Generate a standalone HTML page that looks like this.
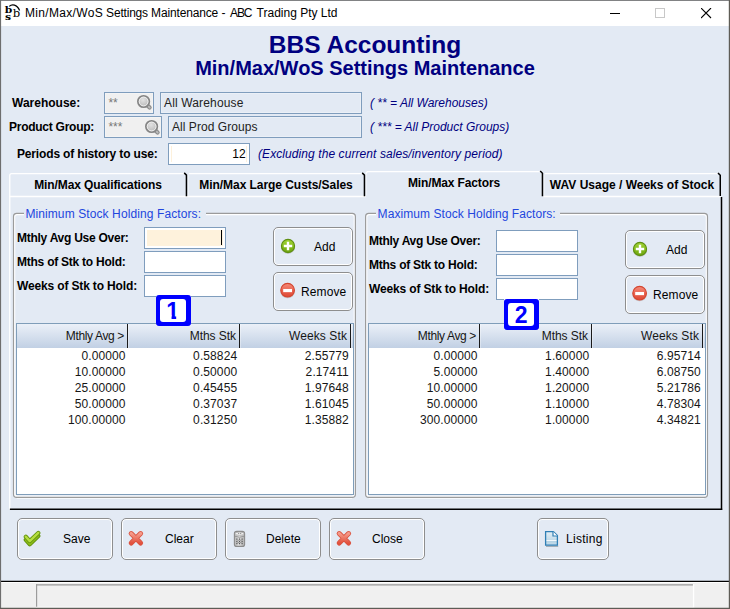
<!DOCTYPE html>
<html><head><meta charset="utf-8"><title>Min/Max/WoS Settings Maintenance</title>
<style>
*{box-sizing:border-box;margin:0;padding:0}
html,body{width:730px;height:609px;overflow:hidden;background:#e3eaf4}
body{position:relative;font-family:"Liberation Sans",Arial,sans-serif;font-size:12px;color:#000}
#root,#root *{position:absolute}
#titlebar{left:1px;top:1px;width:728px;height:25px;background:#fff}
#title{left:24px;top:5px;font-size:12px;white-space:nowrap;color:#000;line-height:14px}
.lbl{font-weight:bold;white-space:nowrap;line-height:14px}
.note{font-style:italic;color:#000080;white-space:nowrap;line-height:14px}
.tf{border:1px solid #7f9dbd;background:#fff;height:22px}
.ro{border:1px solid #7f9dbd;background:#e3eaf4;box-shadow:inset 0 0 0 1px rgba(255,255,255,.3);height:22px;line-height:20px;white-space:nowrap;color:#222}
.btn{border:1px solid #8e8e8e;border-radius:5px;background:#e3eaf4;box-shadow:inset 0 0 0 1px #fff}
.btn span{white-space:nowrap;line-height:14px}
.fs{border:1px solid #9c9c9c;border-radius:4px;box-shadow:1px 1px 0 #fff, inset 1px 1px 0 #fff}
.leg{background:#e3eaf4;color:#2246de;white-space:nowrap;line-height:14px;padding:0 4.5px 0 1.2px}
.tbl{border:1px solid #7f9db9;background:#fff}
.th{top:0;left:0;height:24px;background:linear-gradient(#ebf0f8,#d6e0ee 50%,#c1d0e4)}
.h{top:5px;white-space:nowrap;line-height:14px;color:#161616;text-align:right}
.sep{top:0;width:1px;height:24px;background:#1a1a1a;box-shadow:1px 0 0 rgba(255,255,255,.35)}
.td{white-space:nowrap;line-height:16px;text-align:right;color:#161616;letter-spacing:0.1px}
.tab{font-weight:bold;text-align:center;white-space:nowrap}
.badgebg{background:#fff;width:34.6px;height:31.4px}
.badge{border-radius:3px;background:#0000ff;color:#0000ff;font-weight:bold;font-size:23px;width:34.6px;height:31.4px}
.badge i{left:4.3px;top:3.9px;width:25.7px;height:23.1px;background:#fff;border-radius:3px}
.badge span{left:4px;top:3.5px;width:26.5px;text-align:center;line-height:24px}
</style></head><body>
<div id="root" style="position:absolute;left:0;top:0;width:730px;height:609px">
<div id="titlebar">
 <svg style="left:0px;top:0px" width="24" height="24" viewBox="1 1 24 24"><text x="4.3" y="13" transform="scale(1.1,1)" font-family="DejaVu Serif,serif" font-size="9.8" font-weight="bold">b</text><text x="4.6" y="19.8" transform="scale(1.1,1)" font-family="DejaVu Serif,serif" font-size="9.8" font-weight="bold">s</text><text x="12.7" y="16.9" font-family="DejaVu Serif,serif" font-size="11.6">b</text><path d="M9.2 6.4C12 4 17 4.2 19.6 10.6" fill="none" stroke="#000" stroke-width="1.2"/></svg>
 <div id="title"><span style="position:static;letter-spacing:0.32px">Min/Max/WoS</span><span style="position:static;letter-spacing:-0.2px"> Settings</span><span style="position:static;letter-spacing:-0.15px"> Maintenance</span> - <span style="position:static;letter-spacing:-1.2px;margin-left:1.3px;margin-right:2.3px">ABC</span> Trading Pty Ltd</div>
 <svg style="left:609px;top:7px" width="11" height="11"><path d="M0 5.5H10" stroke="#000" stroke-width="1"/></svg>
 <svg style="left:654px;top:7px" width="11" height="11"><rect x=".5" y=".5" width="9" height="9" fill="none" stroke="#c8c8c8"/></svg>
 <svg style="left:700px;top:7px" width="11" height="11"><path d="M0 0L10 10M10 0L0 10" stroke="#000" stroke-width="1.1"/></svg>
</div>

 <div style="left:0;top:30px;width:730px;text-align:center;font-weight:bold;font-size:24.5px;line-height:30px;color:#000080;transform:translateY(-0.5px)">BBS Accounting</div>
 <div style="left:0;top:56px;width:730px;text-align:center;font-weight:bold;font-size:20px;line-height:24px;color:#000080">Min/Max/WoS Settings Maintenance</div>

 <div class="lbl" style="left:12px;top:96px">Warehouse:</div>
 <div class="ro" style="left:104px;top:92px;width:50px;color:#787878;padding-left:3.4px;background:#f0f0f0">**<svg style="left:31px;top:1px" width="18" height="18" viewBox="0 0 18 18"><defs><radialGradient id="gm1" cx="0.45" cy="0.35" r="0.7"><stop offset="0" stop-color="#e2e2e2"/><stop offset="1" stop-color="#b4b4b4"/></radialGradient></defs><path d="M12 11.9L13.6 13.5" stroke="#8d8d8d" stroke-width="4.2" stroke-linecap="round"/><path d="M12.4 12.3L13.7 13.6" stroke="#bdbdbd" stroke-width="1.8" stroke-linecap="round"/><circle cx="7.6" cy="7.5" r="5.7" fill="url(#gm1)" stroke="#858585" stroke-width="1.8"/><circle cx="7.6" cy="7.5" r="4.4" fill="none" stroke="#efefef" stroke-width="1"/></svg></div>
 <div class="ro" style="left:160px;top:92px;width:202px;padding-left:3px;letter-spacing:0.15px">All Warehouse</div>
 <div class="note" style="left:370px;top:96px">( ** = All Warehouses)</div>

 <div class="lbl" style="left:9px;top:120px;letter-spacing:-0.26px">Product Group:</div>
 <div class="ro" style="left:104px;top:116px;width:58px;color:#787878;padding-left:3.4px;background:#f0f0f0">***<svg style="left:39px;top:2px" width="18" height="18" viewBox="0 0 18 18"><defs><radialGradient id="gm2" cx="0.45" cy="0.35" r="0.7"><stop offset="0" stop-color="#e2e2e2"/><stop offset="1" stop-color="#b4b4b4"/></radialGradient></defs><path d="M12 11.9L13.6 13.5" stroke="#8d8d8d" stroke-width="4.2" stroke-linecap="round"/><path d="M12.4 12.3L13.7 13.6" stroke="#bdbdbd" stroke-width="1.8" stroke-linecap="round"/><circle cx="7.6" cy="7.5" r="5.7" fill="url(#gm2)" stroke="#858585" stroke-width="1.8"/><circle cx="7.6" cy="7.5" r="4.4" fill="none" stroke="#efefef" stroke-width="1"/></svg></div>
 <div class="ro" style="left:168px;top:116px;width:194px;padding-left:3px;letter-spacing:0.05px">All Prod Groups</div>
 <div class="note" style="left:370px;top:120px">( *** = All Product Groups)</div>

 <div class="lbl" style="left:17px;top:147px;letter-spacing:-0.16px">Periods of history to use:</div>
 <div class="tf" style="left:168px;top:143px;width:82px;text-align:right;padding-right:3.4px;line-height:20px"><div style="left:2px;top:2px;width:76px;height:16px;border-left:1px solid #fdf1dc;border-right:1px solid #fdf1dc"></div>12</div>
 <div class="note" style="left:258px;top:147px;letter-spacing:0.08px">(Excluding the current sales/inventory period)</div>

 <div class="tab" style="left:9px;top:175px;width:178px;height:20px;line-height:20px;letter-spacing:-0.11px">Min/Max Qualifications</div>
 <div class="tab" style="left:187px;top:175px;width:178px;height:20px;line-height:20px;letter-spacing:-0.05px">Min/Max Large Custs/Sales</div>
 <div class="tab" style="left:543px;top:175px;width:178px;height:20px;line-height:20px">WAV Usage / Weeks of Stock</div>
 <div class="tab" style="left:365px;top:173px;width:178px;height:20px;line-height:20px;letter-spacing:-0.13px">Min/Max Factors</div>
 <svg style="left:0;top:0" width="730" height="609" viewBox="0 0 730 609"><g fill="none" stroke="#fff" stroke-width="1.35"><path d="M9.75 509.4V175.4Q9.75 173.55 11.6 173.55H184.4"/><path d="M188.9 173.55H362.4"/><path d="M365.9 173.6L367.3 171.6H540.4"/><path d="M544.6 173.55H718.2"/><path d="M9.1 196.4H365.8M543.3 196.4H721" stroke-width="1.55"/><path d="M188.2 174.4V195.6M366.1 173.8V195.6M544 174.4V195.6" stroke-opacity=".55" stroke-width="1.1"/></g><g fill="none" stroke="#000" stroke-width="1.5"><path d="M184.2 172.9L186.45 175.1V196.2"/><path d="M362.2 172.9L364.45 175.1V196.2"/><path d="M540.2 170.9L542.45 173.2V196.2"/><path d="M718 172.9L720.25 175.2V196"/><path d="M721.5 196.9V510"/><path d="M9.9 509.25H722.2" stroke-width="1.7"/></g><path d="M16.7 498.5H352.2" stroke="#f6f9fd" stroke-width="1.1" fill="none"/><path d="M17.05 214.55H351.85Q354.25 214.55 354.25 216.95000000000002V493.85Q354.25 496.25 351.85 496.25H17.05Q14.65 496.25 14.65 493.85V216.95000000000002Q14.65 214.55 17.05 214.55Z" stroke="#fff" stroke-width="1.2" fill="none"/><path d="M16.7 213.4H352.2Q355.4 213.4 355.4 216.6V494.2Q355.4 497.4 352.2 497.4H16.7Q13.5 497.4 13.5 494.2V216.6Q13.5 213.4 16.7 213.4Z" stroke="#9b9b9b" stroke-width="1.15" fill="none"/><path d="M368.8 498.5H704.3" stroke="#f6f9fd" stroke-width="1.1" fill="none"/><path d="M369.15 214.55H703.95Q706.35 214.55 706.35 216.95000000000002V493.85Q706.35 496.25 703.95 496.25H369.15Q366.75 496.25 366.75 493.85V216.95000000000002Q366.75 214.55 369.15 214.55Z" stroke="#fff" stroke-width="1.2" fill="none"/><path d="M368.8 213.4H704.3Q707.5 213.4 707.5 216.6V494.2Q707.5 497.4 704.3 497.4H368.8Q365.6 497.4 365.6 494.2V216.6Q365.6 213.4 368.8 213.4Z" stroke="#9b9b9b" stroke-width="1.15" fill="none"/></svg>

 <div class="leg" style="left:24.2px;top:207px;letter-spacing:0.1px">Minimum Stock Holding Factors:</div>
 <div class="lbl" style="left:17px;top:231px;letter-spacing:-0.26px">Mthly Avg Use Over:</div>
 <div class="lbl" style="left:17px;top:255px;letter-spacing:-0.24px">Mths of Stk to Hold:</div>
 <div class="lbl" style="left:17px;top:279px;letter-spacing:-0.15px">Weeks of Stk to Hold:</div>
 <div class="tf" style="left:144px;top:227px;width:82px;background:#fef2dc;box-shadow:inset 0 0 0 2px #fff"><div style="left:76px;top:2px;width:1px;height:15px;background:#000"></div></div>
 <div class="tf" style="left:144px;top:251px;width:82px"></div>
 <div class="tf" style="left:144px;top:275px;width:82px"></div>
 <div class="btn" style="left:273px;top:227px;width:80px;height:39px"><svg style="left:5px;top:9px" width="18" height="18" viewBox="0 0 18 18"><defs><linearGradient id="ga" x1="0" y1="0" x2="0" y2="1"><stop offset="0" stop-color="#a5d63a"/><stop offset="0.5" stop-color="#86bd1c"/><stop offset="1" stop-color="#6ea510"/></linearGradient></defs><ellipse cx="9" cy="10" rx="7" ry="6.8" fill="#9aa39a" opacity=".55"/><circle cx="9" cy="9" r="6.6" fill="url(#ga)" stroke="#5f8f12" stroke-width="1.1"/><path d="M9 4.8V13.2M4.8 9H13.2" stroke="#fff" stroke-width="2.4"/></svg><span style="left:40px;top:12px">Add</span></div>
 <div class="btn" style="left:273px;top:272px;width:80px;height:39px"><svg style="left:5px;top:8px" width="18" height="18" viewBox="0 0 18 18"><defs><linearGradient id="gr" x1="0" y1="0" x2="0" y2="1"><stop offset="0" stop-color="#f48d7c"/><stop offset="0.5" stop-color="#ea6350"/><stop offset="1" stop-color="#de4a36"/></linearGradient></defs><ellipse cx="8.6" cy="10.2" rx="7.2" ry="7" fill="#a79a9a" opacity=".5"/><circle cx="8.6" cy="9.2" r="6.8" fill="url(#gr)" stroke="#d4452f" stroke-width="1.1"/><path d="M4.2 9.55H13" stroke="#fff" stroke-width="3.2"/></svg><span style="left:27px;top:12px;letter-spacing:0.1px">Remove</span></div>
 <div class="tbl" style="left:16px;top:323px;width:338px;height:172px">
<div class="th" style="width:336px"></div>
<div class="sep" style="left:110px"></div><div class="sep" style="left:222px"></div><div class="sep" style="left:333px"></div>
<div class="h" style="left:1px;width:106px;letter-spacing:-0.36px">Mthly Avg &gt;</div><div class="h" style="left:113px;width:106px;letter-spacing:-0.05px">Mths Stk</div><div class="h" style="left:224px;width:106px;letter-spacing:0.1px">Weeks Stk</div>
<div class="td" style="left:2.5999999999999943px;top:24px;width:106px">0.00000</div><div class="td" style="left:114.19999999999999px;top:24px;width:106px">0.58824</div><div class="td" style="left:225.8px;top:24px;width:106px">2.55779</div>
<div class="td" style="left:2.5999999999999943px;top:40px;width:106px">10.00000</div><div class="td" style="left:114.19999999999999px;top:40px;width:106px">0.50000</div><div class="td" style="left:225.8px;top:40px;width:106px">2.17411</div>
<div class="td" style="left:2.5999999999999943px;top:56px;width:106px">25.00000</div><div class="td" style="left:114.19999999999999px;top:56px;width:106px">0.45455</div><div class="td" style="left:225.8px;top:56px;width:106px">1.97648</div>
<div class="td" style="left:2.5999999999999943px;top:72px;width:106px">50.00000</div><div class="td" style="left:114.19999999999999px;top:72px;width:106px">0.37037</div><div class="td" style="left:225.8px;top:72px;width:106px">1.61045</div>
<div class="td" style="left:2.5999999999999943px;top:88px;width:106px">100.00000</div><div class="td" style="left:114.19999999999999px;top:88px;width:106px">0.31250</div><div class="td" style="left:225.8px;top:88px;width:106px">1.35882</div>
</div>

 <div class="badgebg" style="left:156px;top:295px"></div><div class="badge" style="left:156px;top:295px"><i></i><span style="left:3.5px;clip-path:polygon(0 0,100% 0,100% 70%,63% 70%,63% 100%,45.5% 100%,45.5% 70%,0 70%)">1</span></div>

 <div class="leg" style="left:376.4px;top:207px;letter-spacing:0.07px">Maximum Stock Holding Factors:</div>
 <div class="lbl" style="left:369px;top:234px;letter-spacing:-0.26px">Mthly Avg Use Over:</div>
 <div class="lbl" style="left:369px;top:258px;letter-spacing:-0.24px">Mths of Stk to Hold:</div>
 <div class="lbl" style="left:369px;top:282px;letter-spacing:-0.15px">Weeks of Stk to Hold:</div>
 <div class="tf" style="left:496px;top:230px;width:82px"></div>
 <div class="tf" style="left:496px;top:254px;width:82px"></div>
 <div class="tf" style="left:496px;top:278px;width:82px"></div>
 <div class="btn" style="left:625px;top:230px;width:80px;height:39px"><svg style="left:5px;top:9px" width="18" height="18" viewBox="0 0 18 18"><defs><linearGradient id="ga2" x1="0" y1="0" x2="0" y2="1"><stop offset="0" stop-color="#a5d63a"/><stop offset="0.5" stop-color="#86bd1c"/><stop offset="1" stop-color="#6ea510"/></linearGradient></defs><ellipse cx="9" cy="10" rx="7" ry="6.8" fill="#9aa39a" opacity=".55"/><circle cx="9" cy="9" r="6.6" fill="url(#ga2)" stroke="#5f8f12" stroke-width="1.1"/><path d="M9 4.8V13.2M4.8 9H13.2" stroke="#fff" stroke-width="2.4"/></svg><span style="left:40px;top:12px">Add</span></div>
 <div class="btn" style="left:625px;top:275px;width:80px;height:39px"><svg style="left:5px;top:8px" width="18" height="18" viewBox="0 0 18 18"><defs><linearGradient id="gr2" x1="0" y1="0" x2="0" y2="1"><stop offset="0" stop-color="#f48d7c"/><stop offset="0.5" stop-color="#ea6350"/><stop offset="1" stop-color="#de4a36"/></linearGradient></defs><ellipse cx="8.6" cy="10.2" rx="7.2" ry="7" fill="#a79a9a" opacity=".5"/><circle cx="8.6" cy="9.2" r="6.8" fill="url(#gr2)" stroke="#d4452f" stroke-width="1.1"/><path d="M4.2 9.55H13" stroke="#fff" stroke-width="3.2"/></svg><span style="left:27px;top:12px;letter-spacing:0.1px">Remove</span></div>
 <div class="tbl" style="left:368px;top:323px;width:338px;height:172px">
<div class="th" style="width:336px"></div>
<div class="sep" style="left:110px"></div><div class="sep" style="left:222px"></div><div class="sep" style="left:333px"></div>
<div class="h" style="left:1px;width:106px;letter-spacing:-0.36px">Mthly Avg &gt;</div><div class="h" style="left:113px;width:106px;letter-spacing:-0.05px">Mths Stk</div><div class="h" style="left:224px;width:106px;letter-spacing:0.1px">Weeks Stk</div>
<div class="td" style="left:2.5999999999999943px;top:24px;width:106px">0.00000</div><div class="td" style="left:114.19999999999999px;top:24px;width:106px">1.60000</div><div class="td" style="left:225.8px;top:24px;width:106px">6.95714</div>
<div class="td" style="left:2.5999999999999943px;top:40px;width:106px">5.00000</div><div class="td" style="left:114.19999999999999px;top:40px;width:106px">1.40000</div><div class="td" style="left:225.8px;top:40px;width:106px">6.08750</div>
<div class="td" style="left:2.5999999999999943px;top:56px;width:106px">10.00000</div><div class="td" style="left:114.19999999999999px;top:56px;width:106px">1.20000</div><div class="td" style="left:225.8px;top:56px;width:106px">5.21786</div>
<div class="td" style="left:2.5999999999999943px;top:72px;width:106px">50.00000</div><div class="td" style="left:114.19999999999999px;top:72px;width:106px">1.10000</div><div class="td" style="left:225.8px;top:72px;width:106px">4.78304</div>
<div class="td" style="left:2.5999999999999943px;top:88px;width:106px">300.00000</div><div class="td" style="left:114.19999999999999px;top:88px;width:106px">1.00000</div><div class="td" style="left:225.8px;top:88px;width:106px">4.34821</div>
</div>

 <div class="badgebg" style="left:504px;top:299px"></div><div class="badge" style="left:504px;top:299px"><i></i><span>2</span></div>

 <div class="btn" style="left:17px;top:518px;width:96px;height:42px"><svg style="left:5px;top:11px" width="20" height="19" viewBox="0 0 20 19"><g fill="none" stroke-linecap="round" stroke-linejoin="round"><path d="M2.8 9.9L6.8 14.3L15.3 6" stroke="#5f8f0c" stroke-width="4.2"/><path d="M2.8 9.9L6.8 14.3L15.3 6" stroke="#8cbc18" stroke-width="2.4"/><path d="M2.8 6.7L6.8 11.1L15.3 2.9" stroke="#64940e" stroke-width="4.2"/><path d="M2.8 6.7L6.8 11.1L15.3 2.9" stroke="#b6de40" stroke-width="2.4"/></g></svg><span style="left:45px;top:13px">Save</span></div>
 <div class="btn" style="left:121px;top:518px;width:96px;height:42px"><svg style="left:4px;top:9px" width="20" height="20" viewBox="0 0 20 20"><defs><linearGradient id="gx1" x1="0" y1="0" x2="0" y2="1"><stop offset="0" stop-color="#f59a8a"/><stop offset="1" stop-color="#e2513d"/></linearGradient></defs><path d="M5.2 5.6L14.6 15M14.6 5.6L5.2 15" stroke="#d9503c" stroke-width="5" stroke-linecap="round"/><path d="M5.2 5.6L14.6 15M14.6 5.6L5.2 15" stroke="url(#gx1)" stroke-width="3.4" stroke-linecap="round"/></svg><span style="left:43px;top:13px">Clear</span></div>
 <div class="btn" style="left:225px;top:518px;width:96px;height:42px"><svg style="left:6px;top:11px" width="16" height="19" viewBox="0 0 16 19"><defs><linearGradient id="gd" x1="0" y1="0" x2="1" y2="0"><stop offset="0" stop-color="#b4b4b4"/><stop offset="0.45" stop-color="#e4e4e4"/><stop offset="1" stop-color="#adadad"/></linearGradient></defs><path d="M2.4 3.6Q2.4 1.4 4.8 1.4H10.2Q12.6 1.4 12.6 3.6V14.4Q12.6 16.4 10.2 16.4H4.8Q2.4 16.4 2.4 14.4Z" fill="url(#gd)" stroke="#8b8b8b" stroke-width="1.1"/><ellipse cx="7.5" cy="3.7" rx="4.4" ry="1.6" fill="#efefef" stroke="#a2a2a2" stroke-width=".7"/><path d="M2.6 6.2Q7.5 8.3 12.4 6.2" fill="none" stroke="#909090" stroke-width=".9"/><path d="M6.2 3.5h1M8.2 3.5h1" stroke="#777" stroke-width=".9"/><path d="M4.3 9.2h1.2M6.9 9.2h1.2M9.5 9.2h1.2M4.3 11.4h1.2M6.9 11.4h1.2M9.5 11.4h1.2M4.3 13.5h1.2M6.9 13.5h1.2M9.5 13.5h1.2" stroke="#555" stroke-width="1.3"/><path d="M5.6 10.3h1.2M8.2 10.3h1.2M5.6 12.5h1.2M8.2 12.5h1.2" stroke="#8a8a8a" stroke-width="1"/></svg><span style="left:40px;top:13px">Delete</span></div>
 <div class="btn" style="left:329px;top:518px;width:96px;height:42px"><svg style="left:4px;top:9px" width="20" height="20" viewBox="0 0 20 20"><defs><linearGradient id="gx2" x1="0" y1="0" x2="0" y2="1"><stop offset="0" stop-color="#f59a8a"/><stop offset="1" stop-color="#e2513d"/></linearGradient></defs><path d="M5.2 5.6L14.6 15M14.6 5.6L5.2 15" stroke="#d9503c" stroke-width="5" stroke-linecap="round"/><path d="M5.2 5.6L14.6 15M14.6 5.6L5.2 15" stroke="url(#gx2)" stroke-width="3.4" stroke-linecap="round"/></svg><span style="left:42px;top:13px">Close</span></div>
 <div class="btn" style="left:537px;top:518px;width:72px;height:42px"><svg style="left:6px;top:11px" width="16" height="19" viewBox="0 0 16 19"><defs><linearGradient id="gl" x1="0" y1="0" x2="0" y2="1"><stop offset="0" stop-color="#e4eff6"/><stop offset="0.62" stop-color="#c3dbe9"/><stop offset="0.63" stop-color="#f4f9fc"/><stop offset="0.72" stop-color="#f4f9fc"/><stop offset="0.73" stop-color="#b6d3e4"/><stop offset="1" stop-color="#c7deeb"/></linearGradient></defs><path d="M2 16.3H14.2" stroke="#9aa3aa" stroke-width="1.1"/><path d="M1.6 1.6H9.4L13.4 5.6V15.1H1.6Z" fill="url(#gl)" stroke="#2f7fb5" stroke-width="1.3"/><path d="M9 1.6V6H13.4" fill="#fff" stroke="#2f7fb5" stroke-width="1.2"/></svg><span style="left:28px;top:13px;letter-spacing:0.3px">Listing</span></div>

 <div style="left:0;top:582px;width:730px;height:27px;background:#f0f0f0"></div>
 <svg style="left:0;top:0" width="730" height="609" viewBox="0 0 730 609"><g fill="none">
 <path d="M0 581.35H730" stroke="#000" stroke-width="1.3"/><path d="M0 582.55H730" stroke="#fff" stroke-width="1.1"/>
 <path d="M36 584.85H693" stroke="#9a9a9a" stroke-width="1.1"/><path d="M36.6 584.3V607" stroke="#9a9a9a" stroke-width="1.15"/>
 <path d="M693.55 584.3V607.8" stroke="#fff" stroke-width="1.3"/><path d="M36 607.3H694.2" stroke="#fff" stroke-width="1.1"/>
 <path d="M0.55 0V609" stroke="#6e6e6e" stroke-width="1.1"/><path d="M0 0.45H730" stroke="#6e6e6e" stroke-width="0.9"/>
 <path d="M729.4 0V609" stroke="#5e5c56" stroke-width="1.2"/><path d="M0 608.4H730" stroke="#5e5c56" stroke-width="1.2"/>
 </g></svg>
</div>
</body></html>
